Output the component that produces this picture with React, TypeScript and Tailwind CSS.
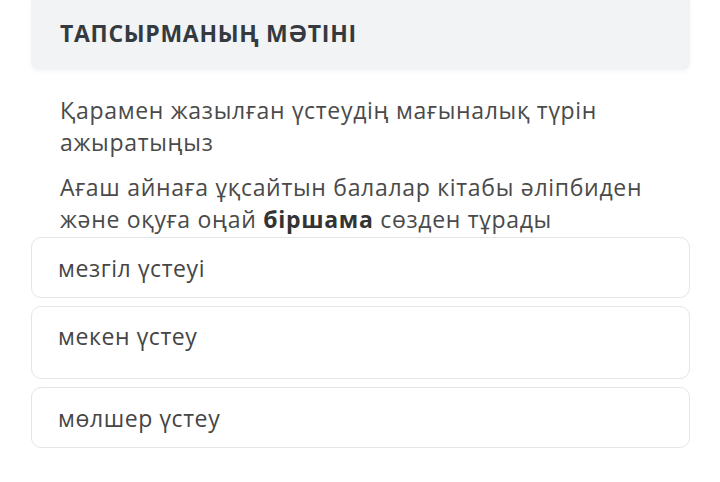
export default function App() {
  const options = [
    { text: "мезгіл үстеуі", h: "h-[61px]", pt: "pt-[14px]" },
    { text: "мекен үстеу", h: "h-[73px]", pt: "pt-[13px]" },
    { text: "мөлшер үстеу", h: "h-[61px]", pt: "pt-[14px]" },
  ];

  return (
    <div className="w-[720px] h-[482px] bg-white overflow-hidden" style={{ fontFamily: '"Open Sans", "Noto Sans", sans-serif' }}>
      <div className="mx-[31px] w-[659px]">
        {/* Title */}
        <div className="h-[70px] bg-[#f1f3f5] rounded-b-[8px] flex items-center px-[29px] pb-[4px] shadow-[0_2px_4px_rgba(0,0,0,0.04)]">
          <h2 className="text-[23px] font-bold text-[#343a40] tracking-[0.7px]">ТАПСЫРМАНЫҢ МӘТІНІ</h2>
        </div>

        {/* Question */}
        <div className="px-[29px] pt-[24px] text-[23px] leading-[32px] text-[#4a4a4a] tracking-[0.7px]">
          <p>Қарамен жазылған үстеудің мағыналық түрін ажыратыңыз</p>
          <p className="mt-[13px]">
            Ағаш айнаға ұқсайтын балалар кітабы әліпбиден және оқуға оңай{" "}
            <b className="font-bold text-[#333]">біршама</b> сөзден тұрады
          </p>
        </div>

        {/* Options */}
        <div className="flex flex-col gap-[8px] mt-[2px]">
          {options.map((o) => (
            <div
              key={o.text}
              className={`${o.h} ${o.pt} border border-[#e3e6e9] rounded-[10px] px-[26px] text-[23px] leading-[32px] text-[#454545] tracking-[0.6px]`}
            >
              {o.text}
            </div>
          ))}
        </div>
      </div>
    </div>
  );
}
